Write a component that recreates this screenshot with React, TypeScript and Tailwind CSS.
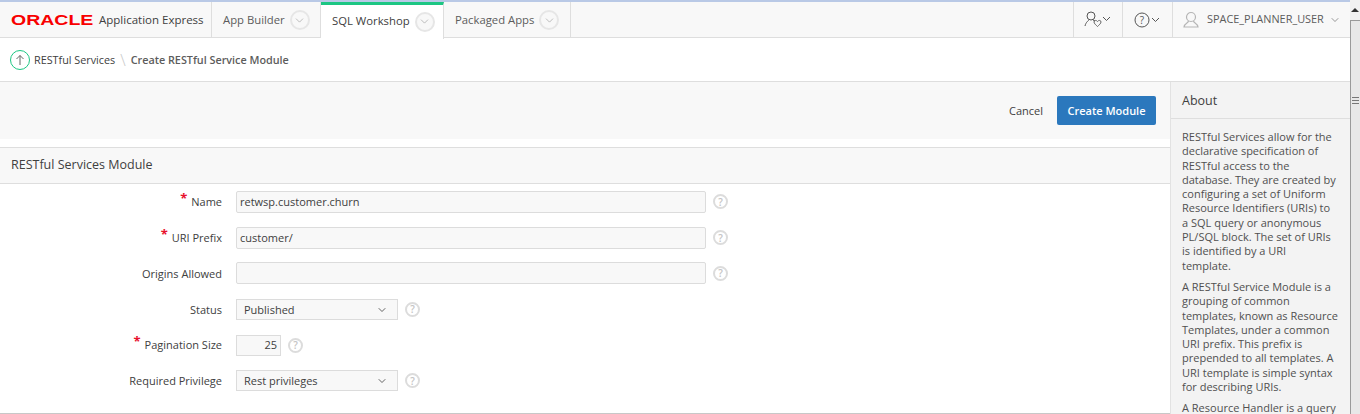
import type { ReactNode } from 'react';
import { ChevronDown } from 'lucide-react';

const font = "font-['Open_Sans',sans-serif]";

function Caret() {
	return (
		<span className="ml-[5px] flex h-[20px] w-[20px] items-center justify-center rounded-full border-2 border-[#e6e6e6] bg-[#f8f8f8]">
			<ChevronDown size={13} strokeWidth={1} className="text-[#8a8a8a]" />
		</span>
	);
}

function Help() {
	return (
		<span className="flex h-[15px] w-[15px] shrink-0 items-center justify-center rounded-full border-2 border-[#dcdcdc] bg-white text-[10px] leading-none font-semibold text-[#c4c4c4]">
			?
		</span>
	);
}

function Tab({ label, active, width }: { label: string; active?: boolean; width: string }) {
	return (
		<div
			className={
				active
					? `flex h-[37px] items-center border-t-[3px] border-r border-t-[#1cc683] border-r-[#dedede] bg-white pb-[1px] pl-[11px] text-[11.300px] text-[#404040] ${width}`
					: `flex h-[35px] items-center border-r border-[#dedede] pt-[1px] pl-[11px] text-[11.300px] text-[#5c5c5c] ${width}`
			}
		>
			{label}
			<Caret />
		</div>
	);
}

function Row({ label, required, children }: { label: string; required?: boolean; children: ReactNode }) {
	return (
		<div className="flex h-[35.800px] items-center">
			<div className="flex w-[222px] shrink-0 items-center justify-end pt-[1px] text-[11px] text-[#404040]">
				{required && <span className="mr-[4px] -translate-y-[4px] text-[13px] leading-none font-bold text-[#e8112d]">*</span>}
				{label}
			</div>
			<div className="ml-[14px] flex items-center">{children}</div>
		</div>
	);
}

function TextField({ value }: { value: string }) {
	return (
		<>
			<div className="flex h-[22px] w-[470px] items-center rounded-[2px] border border-[#dcdcdc] bg-[#f8f8f8] px-[3px] pt-[1px] text-[11px] text-[#404040]">
				{value}
			</div>
			<span className="ml-[7px]">
				<Help />
			</span>
		</>
	);
}

function SelectField({ value }: { value: string }) {
	return (
		<>
			<div className="flex h-[21px] w-[162px] items-center justify-between border border-[#dcdcdc] bg-[#f8f8f8] pt-[1px] pr-[9px] pl-[7px] text-[11px] text-[#404040]">
				{value}
				<ChevronDown size={12} strokeWidth={1.5} className="text-[#333]" />
			</div>
			<span className="ml-[7px]">
				<Help />
			</span>
		</>
	);
}

export default function App() {
	return (
		<div className={`flex h-[414px] w-[1360px] overflow-hidden bg-white ${font}`}>
			<div className="flex w-[1350px] flex-col">
				<div className="h-[2px] shrink-0 bg-[#b9c9e6]" />
				<header className="flex h-[36px] shrink-0 border-b border-[#dedede] bg-[#f8f8f8]">
					<div className="flex w-[212px] items-center border-r border-[#dedede] pl-[11px]">
						<span className="w-[88px] origin-left scale-x-[1.3] font-['Liberation_Sans',sans-serif] text-[15px] leading-none font-bold text-[#f80000]">
							ORACLE
						</span>
						<span className="text-[11.500px] whitespace-nowrap text-[#404040]">Application Express</span>
					</div>
					<Tab label="App Builder" width="w-[109px]" />
					<Tab label="SQL Workshop" active width="w-[123px]" />
					<Tab label="Packaged Apps" width="w-[127px]" />
					<div className="flex-1" />
					<div className="flex w-[50px] items-center justify-center border-x border-[#dedede]">
						<svg width="28" height="17" viewBox="0 0 28 17" fill="none" stroke="#555" strokeWidth="1">
							<circle cx="7" cy="5" r="4" />
							<path d="M1 15c1-4 3-5 4-6M9 9l2 1" />
							<path d="M10 11c0-2 2.500-2 3.500-.5c1-1.500 3.500-1.500 3.500 .5c0 1.500-2 3-3.500 4.500c-1.500-1.500-3.500-3-3.500-4.500z" stroke="#666" />
							<path d="M19 6l3.500 3.500L26 6" />
						</svg>
					</div>
					<div className="flex w-[50px] items-center justify-center border-r border-[#dedede]">
						<svg width="28" height="16" viewBox="0 0 28 16" fill="none" stroke="#555" strokeWidth="1">
							<circle cx="8" cy="8" r="7" />
							<text x="8" y="11.500" textAnchor="middle" fontSize="10" fill="#555" stroke="none">?</text>
							<path d="M18 6l3.500 3.500L25 6" />
						</svg>
					</div>
					<div className="flex w-[177px] items-center pl-[10px] text-[10.900px] text-[#5c5c5c]">
						<svg width="16" height="18" viewBox="0 0 16 18" fill="none" stroke="#b5b5b5" strokeWidth="1.200">
							<circle cx="8" cy="6" r="4.500" />
							<path d="M5.500 10c0 2-4 2-4.500 6h14c-.5-4-4.500-4-4.500-6" />
						</svg>
						<span className="ml-[8px] whitespace-nowrap">SPACE_PLANNER_USER</span>
						<ChevronDown size={12} strokeWidth={1.2} className="ml-[5px] text-[#555]" />
					</div>
				</header>
				<div className="flex h-[44px] shrink-0 items-center border-b border-[#dedede] pt-[1px] pl-[10px] text-[10.800px]">
					<span className="flex h-[20px] w-[20px] items-center justify-center rounded-full border border-[#1cc683]">
						<svg width="10" height="12" viewBox="0 0 10 12" fill="none" stroke="#666" strokeWidth="1">
							<path d="M5 11V1.500M1.500 5L5 1.500 8.500 5" />
						</svg>
					</span>
					<span className="ml-[4px] text-[#404040]">RESTful Services</span>
					<span className="mx-[5px] text-[16px] leading-none font-light text-[#c8c8c8]">\</span>
					<span className="font-semibold text-[#5c5c5c]">Create RESTful Service Module</span>
				</div>
				<div className="flex min-h-0 flex-1">
					<main className="flex w-[1170px] shrink-0 flex-col border-b border-[#c8c8c8]">
						<div className="flex h-[57px] shrink-0 items-center justify-end bg-[#f8f8f8] pr-[14px]">
							<span className="pt-[1px] text-[11px] text-[#404040]">Cancel</span>
							<span className="ml-[14px] flex h-[29px] w-[99px] items-center justify-center rounded-[2px] bg-[#2b78bd] pt-[1px] text-[11px] font-semibold text-white">
								Create Module
							</span>
						</div>
						<div className="mt-[8px] flex h-[37px] shrink-0 items-center border-y border-[#dedede] bg-[#f8f8f8] pl-[11px] text-[12.500px] text-[#404040]">
							RESTful Services Module
						</div>
						<div className="flex flex-col">
							<Row label="Name" required>
								<TextField value="retwsp.customer.churn" />
							</Row>
							<Row label="URI Prefix" required>
								<TextField value="customer/" />
							</Row>
							<Row label="Origins Allowed">
								<TextField value="" />
							</Row>
							<Row label="Status">
								<SelectField value="Published" />
							</Row>
							<Row label="Pagination Size" required>
								<div className="flex h-[21px] w-[45px] items-center justify-end border border-[#dcdcdc] bg-[#f8f8f8] pt-[1px] pr-[3px] text-[11px] text-[#404040]">
									25
								</div>
								<span className="ml-[7px]">
									<Help />
								</span>
							</Row>
							<Row label="Required Privilege">
								<SelectField value="Rest privileges" />
							</Row>
						</div>
					</main>
					<aside className="min-w-0 flex-1 overflow-hidden border-l border-[#e2e2e2] bg-[#f3f3f3]">
						<div className="flex h-[37px] items-center border-b border-[#dedede] pt-[2px] pl-[11px] text-[12.500px] text-[#404040]">
							About
						</div>
						<div className="px-[11px] pt-[11px] text-[11px] leading-[14.300px] text-[#505050]">
							<p>
								RESTful Services allow for the declarative specification of RESTful access to the database. They are
								created by configuring a set of Uniform Resource Identifiers (URIs) to a SQL query or anonymous PL/SQL
								block. The set of URIs is identified by a URI
								<br />
								template.
							</p>
							<p className="mt-[7px]">
								A RESTful Service Module is a grouping of common templates, known as Resource Templates, under a
								common URI prefix. This prefix is prepended to all templates. A URI template is simple syntax for
								describing URIs.
							</p>
							<p className="mt-[7px]">A Resource Handler is a query</p>
						</div>
					</aside>
				</div>
			</div>
			<div className="flex w-[10px] shrink-0 flex-col bg-[#f1f1f1]">
				<div className="flex h-[20px] justify-center pt-[8px]">
					<span className="h-0 w-0 border-x-[4px] border-b-[4px] border-x-transparent border-b-[#333]" />
				</div>
				<div className="flex flex-1 flex-col items-center border-t border-l border-[#9a9a9a] bg-[#e8e8e8] pt-[76px]">
					<span className="h-[1px] w-[7px] bg-[#777]" />
					<span className="mt-[2px] h-[1px] w-[7px] bg-[#777]" />
					<span className="mt-[2px] h-[1px] w-[7px] bg-[#777]" />
				</div>
			</div>
		</div>
	);
}
